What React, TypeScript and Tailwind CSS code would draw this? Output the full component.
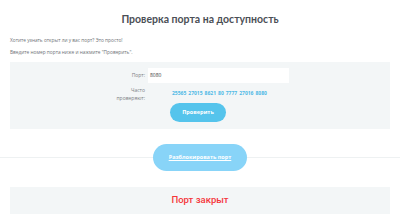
import React from "react";

const popular = ["25565", "27015", "8621", "80", "7777", "27016", "8080"];

export default function App() {
  return (
    <div className="relative h-[221px] w-[400px] overflow-hidden bg-white font-['Open_Sans',sans-serif]">
      <h1 className="pt-[11px] text-center font-['Lato',sans-serif] text-[10.5px] font-bold leading-[16px] text-[#4b4f56]">
        Проверка порта на доступность
      </h1>

      <div className="mt-[10px] px-[10px] text-[4.8px] leading-[6px] text-[#6f7378]">
        <p>Хотите узнать открыт ли у вас порт? Это просто!</p>
        <p className="mt-[6px]">Введите номер порта ниже и нажмите "Проверить".</p>
      </div>

      <div className="mx-[10px] mt-[7px] h-[67px] bg-[#f3f6f7] pt-[6px]">
        <div className="flex items-center">
          <span className="w-[138px] pr-[3px] text-right text-[5px] text-[#7c8085]">Порт:</span>
          <div className="flex h-[15px] w-[141px] items-center bg-white px-[2px] text-[5px] text-[#444]">
            8080
          </div>
        </div>
        <div className="mt-[3px] flex items-center">
          <span className="w-[138px] pr-[3px] text-right text-[5px] leading-[8px] text-[#7c8085]">
            Часто
            <br />
            проверяют:
          </span>
          <div className="flex gap-[2px] pl-[24px] text-[5px] font-bold text-[#4fb9e6]">
            {popular.map((p) => (
              <span key={p}>{p}</span>
            ))}
          </div>
        </div>
        <div className="mt-[1px] flex justify-center pr-[4px]">
          <button className="h-[19px] w-[56px] rounded-full bg-[#55c4ec] text-[5.5px] font-bold text-white">
            Проверить
          </button>
        </div>
      </div>

      <div className="relative mt-[15px] flex h-[27px] items-center justify-center">
        <div className="absolute left-0 right-0 top-[13px] h-px bg-[#eef1f2]" />
        <button className="relative z-10 h-[27px] w-[94px] rounded-full bg-[#88d4f8] text-[5.5px] font-bold text-white underline">
          Разблокировать порт
        </button>
      </div>

      <div className="mx-[10px] mt-[16px] flex h-[27px] items-center justify-center bg-[#f3f6f7]">
        <span className="font-['Roboto',sans-serif] text-[9.5px] font-medium text-[#f5353a]">Порт закрыт</span>
      </div>
    </div>
  );
}
